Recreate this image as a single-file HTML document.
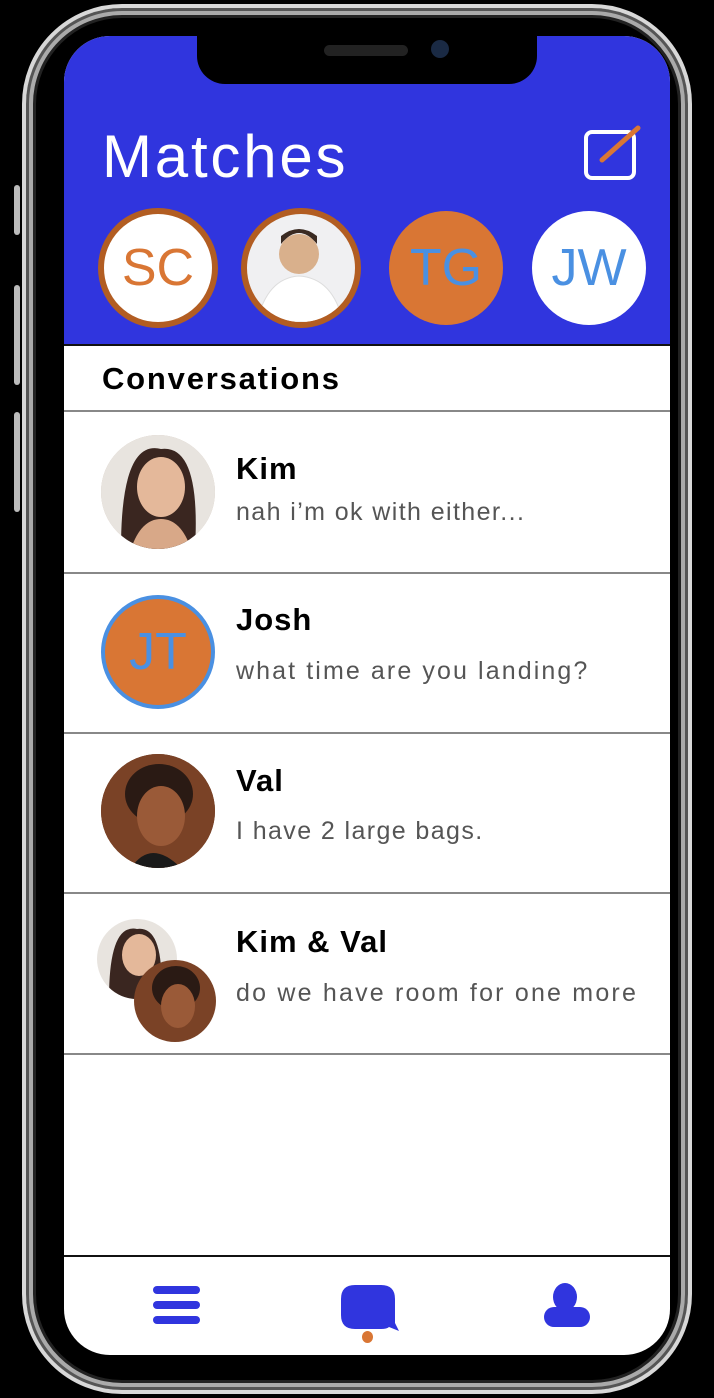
<!DOCTYPE html>
<html><head><meta charset="utf-8"><style>
*{margin:0;padding:0;box-sizing:border-box}
body{width:714px;height:1398px;background:#000;position:relative;overflow:hidden;font-family:"Liberation Sans",sans-serif}
.abs{position:absolute}
.frame{left:22px;top:4px;width:670px;height:1390px;border-radius:100px;border:4px solid #d8d8d8;box-shadow:inset 0 0 0 3px #555, inset 0 0 0 7px #aaa, inset 0 0 0 10px #222}
.screen{left:64px;top:36px;width:606px;height:1319px;border-radius:46px;background:#fff;overflow:hidden}
.hdr{left:0;top:0;width:606px;height:310px;background:#3035de;border-bottom:2px solid #111}
.notch{left:133px;top:0;width:340px;height:48px;background:#000;border-radius:0 0 28px 28px}
.av{border-radius:50%;text-align:center;font-size:52px}
.line{left:0;width:606px;height:2px;background:#888}
.name{font-weight:bold;font-size:31px;color:#000;letter-spacing:1px}
.msg{font-size:25px;color:#555;letter-spacing:1.4px}
</style></head><body>
<div class="abs frame"></div>
<div class="abs" style="left:14px;top:185px;width:6px;height:50px;background:#bbb;border-radius:3px"></div>
<div class="abs" style="left:14px;top:285px;width:6px;height:100px;background:#bbb;border-radius:3px"></div>
<div class="abs" style="left:14px;top:412px;width:6px;height:100px;background:#bbb;border-radius:3px"></div>
<div class="abs screen">
 <div class="abs hdr"></div>
 <div class="abs notch"></div>
 <div class="abs" style="left:260px;top:9px;width:84px;height:11px;background:#222;border-radius:6px"></div>
 <div class="abs" style="left:367px;top:4px;width:18px;height:18px;background:#1a2a44;border-radius:50%"></div>
 <div class="abs" style="left:38px;top:86px;color:#fff;font-size:60px;letter-spacing:2.8px">Matches</div>
 <svg class="abs" style="left:518px;top:88px" width="62" height="60"><rect x="4" y="8" width="48" height="46" rx="6" fill="none" stroke="#fff" stroke-width="4"/><line x1="20" y1="36" x2="56" y2="4" stroke="#d97634" stroke-width="5" stroke-linecap="round"/></svg>
 <div class="abs av" style="left:34px;top:172px;width:120px;height:120px;background:#fff;border:6px solid #b25d22;color:#d97634;line-height:108px">SC</div>
 <div class="abs av" style="left:177px;top:172px;width:120px;height:120px;background:#f0f0f2;border:6px solid #b25d22;overflow:hidden"><svg width="108" height="108"><circle cx="52" cy="40" r="20" fill="#d9b08c"/><path d="M34 30 q18-22 36 0 v-8 q-18-14-36 0z" fill="#3a2a22"/><path d="M10 108 q10-44 42-46 q34 2 44 46z" fill="#fff" stroke="#ddd"/></svg></div>
 <div class="abs av" style="left:325px;top:175px;width:114px;height:114px;background:#d97634;color:#4a90e2;line-height:114px">TG</div>
 <div class="abs av" style="left:468px;top:175px;width:114px;height:114px;background:#fff;color:#4a90e2;line-height:114px">JW</div>
 <div class="abs" style="left:38px;top:325px;font-weight:bold;font-size:31px;letter-spacing:1.8px">Conversations</div>
 <div class="abs line" style="top:374px"></div>
 <div class="abs av" style="left:37px;top:399px;width:114px;height:114px;background:#cdbcb0;overflow:hidden"><svg width="114" height="114"><rect width="114" height="114" fill="#e8e4df"/><path d="M20 114 q0-110 40-100 q40-5 34 100z" fill="#3a2620"/><ellipse cx="60" cy="52" rx="24" ry="30" fill="#e4b89a"/><path d="M30 114 q10-30 30-30 q20 0 30 30z" fill="#d8a888"/></svg></div>
 <div class="abs name" style="left:172px;top:415px">Kim</div>
 <div class="abs msg" style="left:172px;top:462px">nah i’m ok with either...</div>
 <div class="abs line" style="top:536px"></div>
 <div class="abs av" style="left:37px;top:559px;width:114px;height:114px;background:#d97634;border:4px solid #4a90e2;color:#4a90e2;line-height:106px">JT</div>
 <div class="abs name" style="left:172px;top:566px">Josh</div>
 <div class="abs msg" style="left:172px;top:621px;letter-spacing:2.1px">what time are you landing?</div>
 <div class="abs line" style="top:696px"></div>
 <div class="abs av" style="left:37px;top:718px;width:114px;height:114px;background:#6b3a22;overflow:hidden"><svg width="114" height="114"><rect width="114" height="114" fill="#7a4226"/><ellipse cx="58" cy="40" rx="34" ry="30" fill="#2a1a14"/><ellipse cx="60" cy="62" rx="24" ry="30" fill="#9a5a38"/><path d="M30 114 q20-30 50 0z" fill="#1a1a1a"/></svg></div>
 <div class="abs name" style="left:172px;top:727px">Val</div>
 <div class="abs msg" style="left:172px;top:781px">I have 2 large bags.</div>
 <div class="abs line" style="top:856px"></div>
 <div class="abs av" style="left:33px;top:883px;width:80px;height:80px;background:#e8e4df;overflow:hidden"><svg width="80" height="80"><path d="M12 80 q0-76 28-70 q28-4 24 70z" fill="#3a2620"/><ellipse cx="42" cy="36" rx="17" ry="21" fill="#e4b89a"/></svg></div>
 <div class="abs av" style="left:70px;top:924px;width:82px;height:82px;background:#7a4226;overflow:hidden"><svg width="82" height="82"><ellipse cx="42" cy="28" rx="24" ry="22" fill="#2a1a14"/><ellipse cx="44" cy="46" rx="17" ry="22" fill="#9a5a38"/></svg></div>
 <div class="abs name" style="left:172px;top:888px">Kim &amp; Val</div>
 <div class="abs msg" style="left:172px;top:943px;letter-spacing:2.2px">do we have room for one more</div>
 <div class="abs line" style="top:1017px"></div>
 <div class="abs" style="left:0;top:1219px;width:606px;height:2px;background:#111"></div>
 <div class="abs" style="left:89px;top:1250px;width:47px;height:8px;background:#3035de;border-radius:4px"></div>
 <div class="abs" style="left:89px;top:1265px;width:47px;height:8px;background:#3035de;border-radius:4px"></div>
 <div class="abs" style="left:89px;top:1280px;width:47px;height:8px;background:#3035de;border-radius:4px"></div>
 <svg class="abs" style="left:275px;top:1249px" width="60" height="46"><path d="M16 0 h26 q14 0 14 14 v24 l4 8 l-10-4 q-2 2-8 2 h-26 q-14 0-14-14 v-16 q0-14 14-14z" fill="#3035de"/></svg>
 <div class="abs" style="left:298px;top:1295px;width:11px;height:12px;background:#d97634;border-radius:50%"></div>
 <div class="abs" style="left:489px;top:1247px;width:24px;height:28px;background:#3035de;border-radius:50%"></div>
 <div class="abs" style="left:480px;top:1271px;width:46px;height:20px;background:#3035de;border-radius:10px"></div>
</div>
</body></html>
